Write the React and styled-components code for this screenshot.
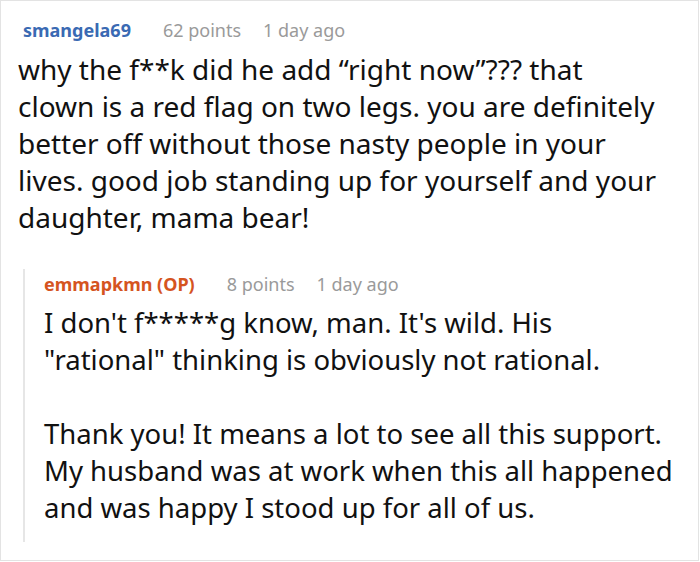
import React from 'react';
import styled, { createGlobalStyle } from 'styled-components';

const GlobalStyle = createGlobalStyle`
  html, body {
    margin: 0;
    padding: 0;
    background: #fff;
  }
  body {
    font-family: "Noto Sans", "Open Sans", sans-serif;
  }
`

const Frame = styled.div`
  box-sizing: border-box;
  width: 699px;
  height: 561px;
  border: 1px solid #e3e3e3;
  padding: 14px 18px 0 17px;
  overflow: hidden;
`

const Comment = styled.div`
  display: flex;
  flex-direction: column;
`

const Meta = styled.div`
  display: flex;
  align-items: baseline;
  gap: 22px;
  padding-left: 5px;
  font-size: 18px;
  line-height: 30px;
`

const Author = styled.span`
  font-weight: 700;
  margin-right: 10px;
  color: ${p => p.$op ? '#d5541f' : '#3a6ab3'};
`

const Info = styled.span`
  color: #9a9a9a;
`

const Body = styled.div`
  font-size: ${p => p.$size || 27.5}px;
  line-height: 37px;
  color: #111;
  max-width: ${p => p.$width ? `${p.$width}px` : 'none'};
  margin-top: ${p => p.$top || 6}px;
`

const Para = styled.p`
  margin: 0;
  & + & {
    margin-top: 37px;
  }
`

const Replies = styled.div`
  margin: 33px 0 0 5px;
  border-left: 2px solid #e6e6e6;
  padding: 0 0 16px 19px;
`

const ReplyMeta = styled(Meta)`
  padding-left: 0;
`

export default function App() {
  return (
    <>
      <GlobalStyle />
      <Frame>
        <Comment>
          <Meta>
            <Author>smangela69</Author>
            <Info>62 points</Info>
            <Info>1 day ago</Info>
          </Meta>
          <Body $size={28} $width={643}>
            <Para>
              why the f**k did he add “right now”??? that clown is a red flag on two legs. you are definitely better off without those nasty people in your lives. good job standing up for yourself and your daughter, mama bear!
            </Para>
          </Body>
          <Replies>
            <ReplyMeta>
              <Author $op>emmapkmn (OP)</Author>
              <Info>8 points</Info>
              <Info>1 day ago</Info>
            </ReplyMeta>
            <Body $top={5}>
              <Para>I don't f*****g know, man. It's wild. His "rational" thinking is obviously not rational.</Para>
              <Para>Thank you! It means a lot to see all this support. My husband was at work when this all happened and was happy I stood up for all of us.</Para>
            </Body>
          </Replies>
        </Comment>
      </Frame>
    </>
  );
}
